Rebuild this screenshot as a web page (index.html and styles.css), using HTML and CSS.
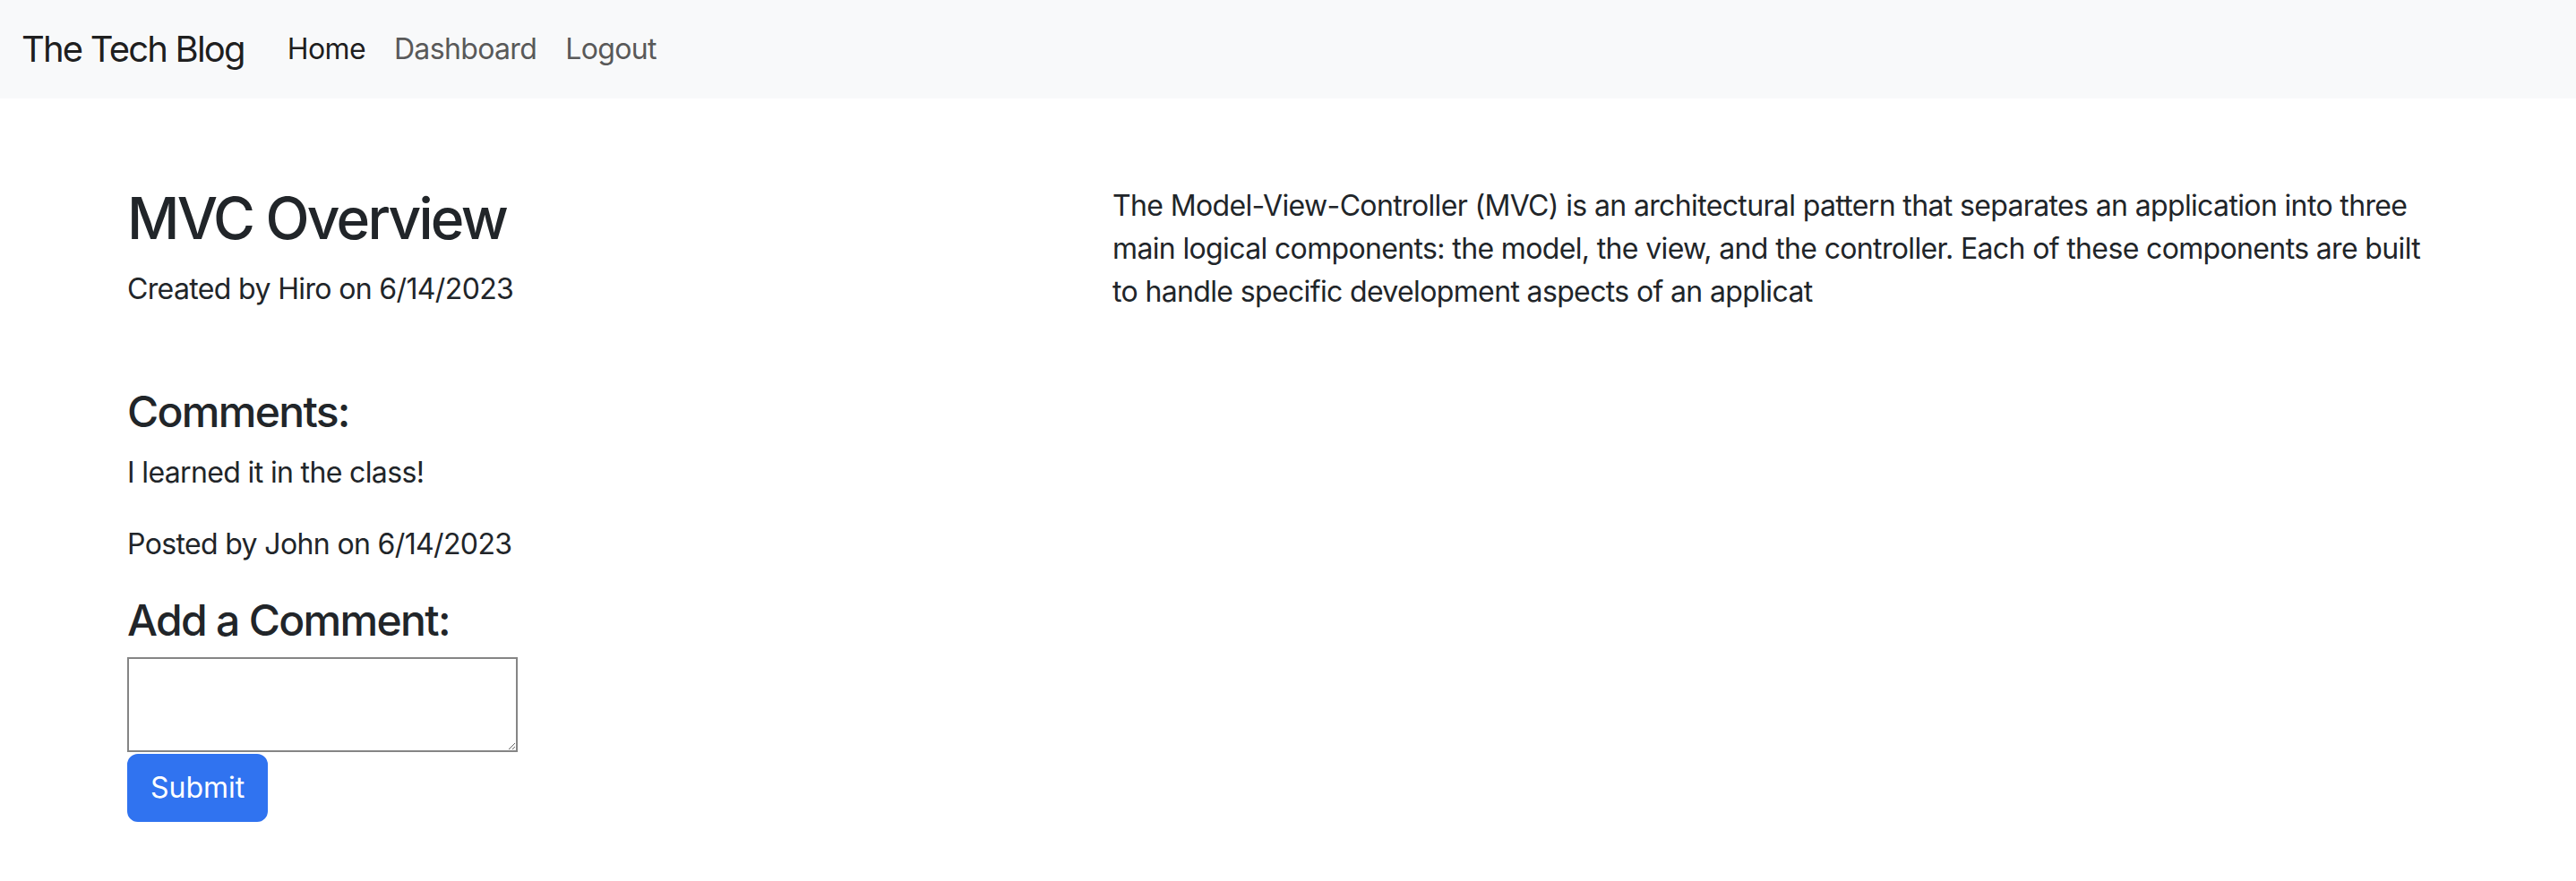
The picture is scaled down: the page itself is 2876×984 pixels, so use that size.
FILE: index.html
```html
<!DOCTYPE html>
<html lang="en">
<head>
<meta charset="utf-8">
<title>The Tech Blog</title>
<link rel="stylesheet" href="styles.css">
</head>
<body>
<nav class="navbar">
  <a class="brand" href="#">The Tech Blog</a>
  <ul class="nav">
    <li><a class="nav-link active" href="#">Home</a></li>
    <li><a class="nav-link" href="#">Dashboard</a></li>
    <li><a class="nav-link" href="#">Logout</a></li>
  </ul>
</nav>
<main class="container">
  <div class="row">
    <section class="col-left">
      <h2 class="title">MVC Overview</h2>
      <p class="meta">Created by Hiro on 6/14/2023</p>
      <div class="comments">
        <h4 class="sub">Comments:</h4>
        <p class="text">I learned it in the class!</p>
        <p class="text">Posted by John on 6/14/2023</p>
      </div>
      <form class="comment-form">
        <h4 class="sub">Add a Comment:</h4>
        <textarea class="comment-box"></textarea>
        <button type="button" class="btn">Submit</button>
      </form>
    </section>
    <section class="col-right">
      <p class="body">The Model-View-Controller (MVC) is an architectural pattern that separates an application into three main logical components: the model, the view, and the controller. Each of these components are built to handle specific development aspects of an applicat</p>
    </section>
  </div>
</main>
</body>
</html>
```
FILE: styles.css
```css
* { box-sizing: border-box; }
html, body {
  margin: 0;
  padding: 0;
  background: #fff;
}
body {
  font-family: Inter, "Noto Sans", "Liberation Sans", sans-serif;
  font-size: 32px;
  line-height: 1.5;
  letter-spacing: -0.02em;
  color: #212529;
}
a { text-decoration: none; }

.navbar {
  display: flex;
  align-items: center;
  height: 110px;
  padding: 0 24px;
  background: #f8f9fa;
}
.brand {
  font-size: 40px;
  letter-spacing: -0.045em;
  color: rgba(0,0,0,.9);
  margin-right: 32px;
  line-height: 1.5;
}
.nav {
  display: flex;
  list-style: none;
  margin: 0;
  padding: 0;
}
.nav-link {
  display: block;
  padding: 16px 16px;
  color: #595959;
}
.nav-link.active { color: rgba(0,0,0,.9); }

.container {
  width: 2640px;
  margin: 0 auto;
  padding: 0 24px;
}
.row {
  display: flex;
  margin: 0 -24px;
  padding-top: 96px;
}
.col-left {
  flex: 0 0 41.6667%;
  padding: 0 24px;
}
.col-right {
  flex: 0 0 58.3333%;
  padding: 0 24px;
}
.title {
  font-size: 64px;
  font-weight: 500;
  letter-spacing: -0.043em;
  line-height: 1.2;
  margin: 0 0 16px;
}
.meta { margin: 0 0 32px; }
.comments { margin-top: 84px; }
.sub {
  font-size: 48px;
  font-weight: 500;
  letter-spacing: -0.035em;
  line-height: 1.2;
  margin: 0 0 16px;
}
.text { margin: 0 0 32px; }
.comment-form { display: flex; flex-direction: column; align-items: flex-start; }
.comment-form .sub { margin-bottom: 12px; }
.comment-box {
  width: 436px;
  height: 106px;
  border: 2px solid #858585;
  margin: 0;
  font: inherit;
  resize: both;
}
.btn {
  margin-top: 2px;
  font: inherit;
  color: #fff;
  background: #3073f0;
  border: 2px solid #3073f0;
  border-radius: 12px;
  padding: 12px 24px;
  line-height: 1.5;
  cursor: pointer;
}
.body {
  margin: 0;
  max-width: 1472px;
}
```
